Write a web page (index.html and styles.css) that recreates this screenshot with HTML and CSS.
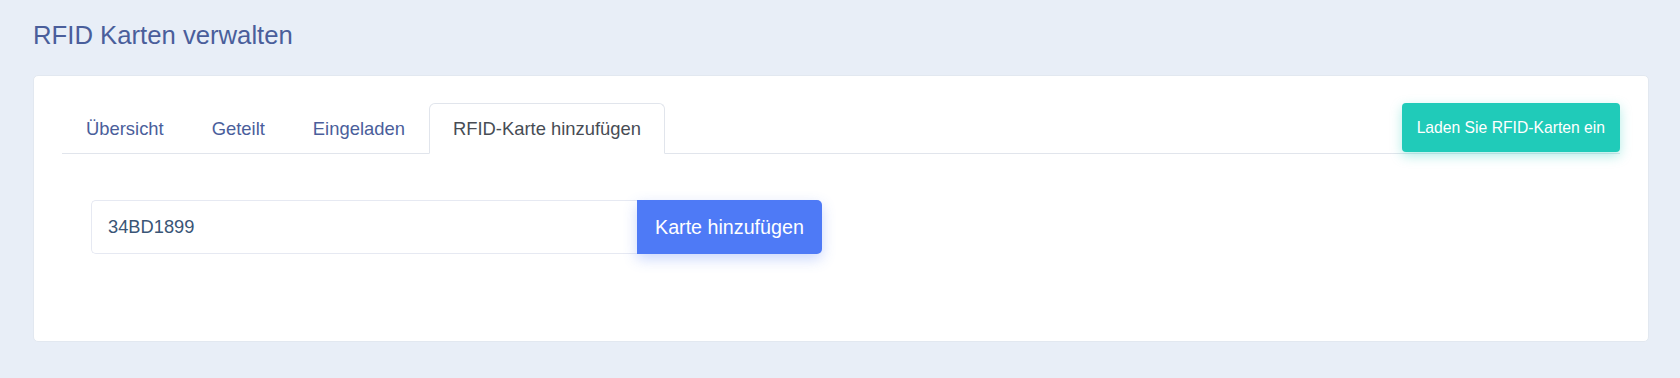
FILE: index.html
```html
<!DOCTYPE html>
<html lang="de">
<head>
<meta charset="utf-8">
<title>RFID Karten verwalten</title>
<link rel="stylesheet" href="styles.css">
</head>
<body>
<div class="page">
  <h1 class="title">RFID Karten verwalten</h1>
  <div class="card">
    <div class="tabs-head">
      <ul class="tabs">
        <li class="tab">Übersicht</li>
        <li class="tab">Geteilt</li>
        <li class="tab">Eingeladen</li>
        <li class="tab active">RFID-Karte hinzufügen</li>
      </ul>
      <button class="btn-load" type="button">Laden Sie RFID-Karten ein</button>
    </div>
    <div class="tab-content">
      <div class="input-group">
        <input class="card-input" type="text" value="34BD1899">
        <button class="btn-add" type="button">Karte hinzufügen</button>
      </div>
    </div>
  </div>
</div>
</body>
</html>
```

FILE: styles.css
```css
* { box-sizing: border-box; }

html, body {
  margin: 0;
  padding: 0;
  background: #e8eef7;
  font-family: "Liberation Sans", Arial, sans-serif;
}

.page {
  padding: 20px 31px 0 33px;
}

.title {
  margin: 0 0 25px 0;
  font-size: 25.7px;
  line-height: 30px;
  font-weight: 400;
  color: #4a5e9b;
}

.card {
  background: #ffffff;
  border: 1px solid #e2e8f0;
  border-radius: 5px;
  padding: 27px 28px 28px 28px;
}

.tabs-head {
  display: flex;
  align-items: flex-start;
  border-bottom: 1px solid #e1e5ec;
}

.tabs {
  display: flex;
  list-style: none;
  margin: 0;
  padding: 0;
  flex: 1;
}

.tab {
  font-size: 18.4px;
  line-height: 26px;
  padding: 12px 23px 11px 23px;
  border: 1px solid transparent;
  border-radius: 6px 6px 0 0;
  margin-bottom: -1px;
  color: #4a5e9b;
  white-space: nowrap;
}

.tab.active {
  color: #474c54;
  background: #ffffff;
  border-color: #e1e5ec #e1e5ec #ffffff #e1e5ec;
}

.btn-load {
  height: 49px;
  padding: 0 15px;
  border: 0;
  border-radius: 4px;
  background: #20cbb9;
  color: #ffffff;
  font-family: "Liberation Sans", Arial, sans-serif;
  font-size: 15.7px;
  white-space: nowrap;
  box-shadow: 0 4px 12px rgba(32, 203, 185, 0.35);
}

.tab-content {
  padding: 46px 29px 59px 29px;
}

.input-group {
  display: flex;
  height: 54px;
}

.card-input {
  width: 546px;
  height: 54px;
  border: 1px solid #e6e9f2;
  border-right: 0;
  border-radius: 5px 0 0 5px;
  padding: 0 16px;
  font-family: "Liberation Sans", Arial, sans-serif;
  font-size: 18.3px;
  color: #3a5576;
  background: #ffffff;
  outline: none;
}

.btn-add {
  height: 54px;
  padding: 0 18px;
  border: 0;
  border-radius: 0 5px 5px 0;
  background: #4e7af6;
  color: #ffffff;
  font-family: "Liberation Sans", Arial, sans-serif;
  font-size: 19.7px;
  white-space: nowrap;
  box-shadow: 0 5px 14px rgba(78, 122, 246, 0.3);
}
```
